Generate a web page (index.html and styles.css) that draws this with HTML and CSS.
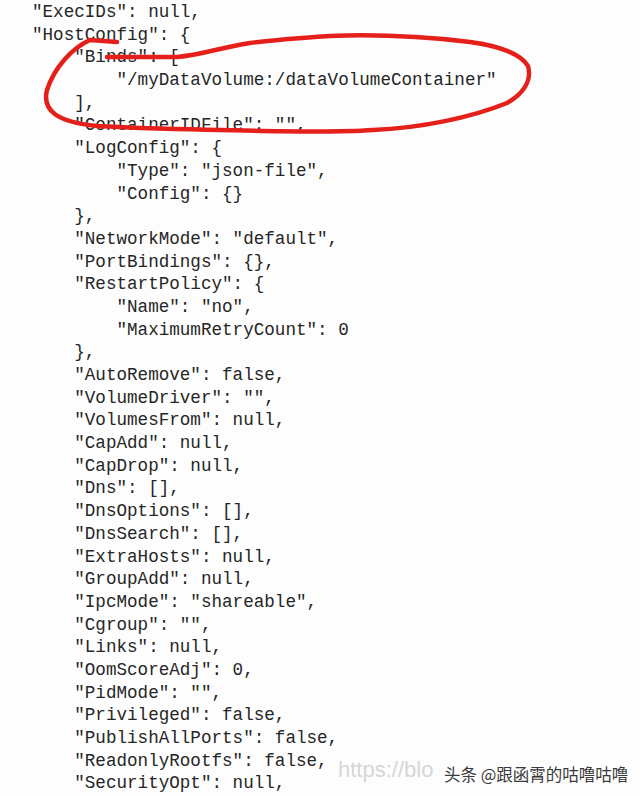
FILE: index.html
```html
<!DOCTYPE html>
<html lang="en">
<head>
<meta charset="utf-8">
<title>HostConfig</title>
<link rel="stylesheet" href="styles.css">
</head>
<body>
<main class="shot">
<pre class="code">"ExecIDs": null,
"HostConfig": {
    "Binds": [
        "/myDataVolume:/dataVolumeContainer"
    ],
    "ContainerIDFile": "",
    "LogConfig": {
        "Type": "json-file",
        "Config": {}
    },
    "NetworkMode": "default",
    "PortBindings": {},
    "RestartPolicy": {
        "Name": "no",
        "MaximumRetryCount": 0
    },
    "AutoRemove": false,
    "VolumeDriver": "",
    "VolumesFrom": null,
    "CapAdd": null,
    "CapDrop": null,
    "Dns": [],
    "DnsOptions": [],
    "DnsSearch": [],
    "ExtraHosts": null,
    "GroupAdd": null,
    "IpcMode": "shareable",
    "Cgroup": "",
    "Links": null,
    "OomScoreAdj": 0,
    "PidMode": "",
    "Privileged": false,
    "PublishAllPorts": false,
    "ReadonlyRootfs": false,
    "SecurityOpt": null,</pre>
<svg class="mark" width="640" height="796" viewBox="0 0 640 796" aria-hidden="true">
  <path d="M117,42 L90,40 C72,48 54,68 47,90 C42,110 56,122 97,126 L140,128 C250,131 330,133 373,130 C420,128 470,118 507,103 C524,93 532,80 528,66 C520,52 492,45 470,42 C420,36 380,34 330,36 C300,38 272,40 250,43 C218,48 202,55 177,57 L107,57" />
</svg>
<div class="wm-url">https://blo</div>
<div class="wm-name">头条 @跟函霄的咕噜咕噜</div>
</main>
</body>
</html>
```
FILE: styles.css
```css
html, body {
  margin: 0;
  padding: 0;
  background: #fdfdfd;
}
.shot {
  position: relative;
  width: 640px;
  height: 796px;
  overflow: hidden;
}
.code {
  margin: 0;
  padding: 1px 0 0 32px;
  width: max-content;
  font-family: "Liberation Mono", "Courier New", monospace;
  font-size: 17.6px;
  line-height: 22.68px;
  color: #262626;
}
.mark {
  position: absolute;
  left: 0;
  top: 0;
}
.mark path {
  fill: none;
  stroke: #e5201a;
  stroke-width: 4.5;
  stroke-linecap: round;
  stroke-linejoin: round;
}
.wm-url {
  position: absolute;
  left: 338px;
  top: 757px;
  font-family: "Liberation Sans", Arial, sans-serif;
  font-size: 22px;
  color: #d6d6d6;
}
.wm-name {
  position: absolute;
  left: 444px;
  top: 762px;
  font-family: "Noto Sans CJK SC", "Noto Sans", sans-serif;
  font-size: 16.5px;
  color: #3a3a3a;
  text-shadow: 0 0 2px #fff, 0 0 1px #fff;
}
```
